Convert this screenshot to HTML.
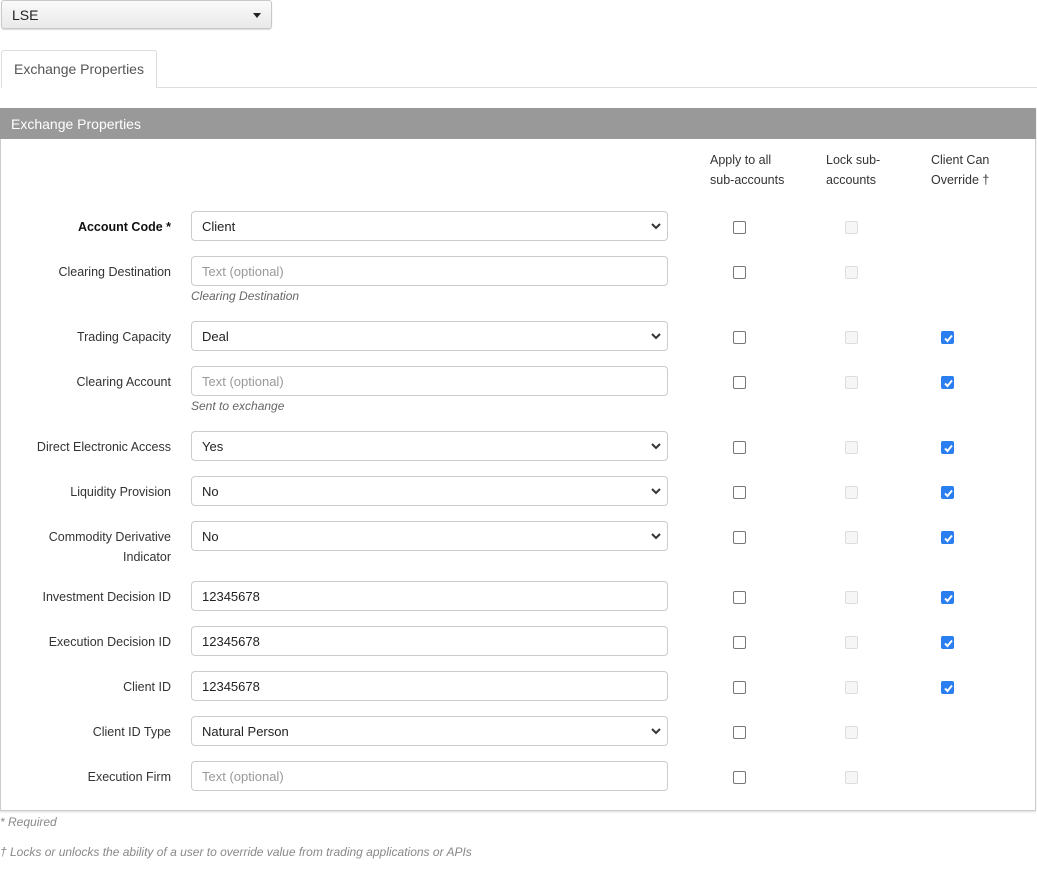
<!DOCTYPE html>
<html><head><meta charset="utf-8"><style>
*{box-sizing:border-box}
body{margin:0;width:1037px;height:879px;background:#fff;font-family:"Liberation Sans",sans-serif;color:#333;position:relative;overflow:hidden;font-size:13px}
.a{position:absolute}
.top{left:1px;top:0;width:271px;height:29px;border:1px solid #c8c8c8;border-radius:3px;background:linear-gradient(#fafafa,#e9e9e9);box-shadow:0 1px 1px rgba(0,0,0,.15);font-size:14px;padding:6px 10px;color:#222}
.tri{right:10px;top:12px;width:0;height:0;border-left:4px solid transparent;border-right:4px solid transparent;border-top:5px solid #222}
.tab{left:1px;top:50px;width:156px;height:38px;border:1px solid #ddd;border-bottom:none;border-radius:3px 3px 0 0;background:#fff;font-size:14px;color:#555;padding:10px 12px}
.tline{left:157px;top:87px;right:0;height:1px;background:#ddd}
.panel{left:0;top:108px;width:1036px;height:703px;border:1px solid #ccc;border-top:none;box-shadow:0 1px 2px rgba(0,0,0,.15)}
.hdr{left:0;top:108px;width:1036px;height:31px;background:#999;color:#fff;font-size:14px;padding:8px 11px}
.lbl{right:866px;text-align:right;font-size:12.5px;color:#333;line-height:20px}
.in{left:191px;width:477px;height:30px;border:1px solid #ccc;border-radius:4px;padding:7px 10px;font-size:13px;color:#222;background:#fff}
.ph{color:#999}
.chev{right:6px;top:9px}
.help{left:191px;font-style:italic;color:#666;font-size:12px}
.cb{width:13px;height:13px;border:1px solid #777;border-radius:2px;background:#fff}
.cb.d{border-color:#ddd;background:#f6f6f6}
.cb.c{background:#2a7ef0;border-color:#2a7ef0}
.cb.c svg{position:absolute;left:1px;top:1px}
.th{font-size:12.5px;line-height:20px;color:#333}
.foot{left:0;font-style:italic;color:#888;font-size:12px}
</style></head><body>
<div class="a top">LSE<div class="a tri"></div></div>
<div class="a tab">Exchange Properties</div>
<div class="a tline"></div>
<div class="a panel"></div>
<div class="a hdr">Exchange Properties</div>
<div class="a th" style="left:710px;top:150px">Apply to all<br>sub-accounts</div>
<div class="a th" style="left:826px;top:150px">Lock sub-<br>accounts</div>
<div class="a th" style="left:931px;top:150px">Client Can<br>Override †</div>
<div id="rows"></div>
<script>
var rows=[
["<b style='color:#111'>Account Code *</b>",226,"Client",1,0,0],
["Clearing Destination",271,"Text (optional)",0,1,0,"Clearing Destination"],
["Trading Capacity",336,"Deal",1,0,1],
["Clearing Account",381,"Text (optional)",0,1,1,"Sent to exchange"],
["Direct Electronic Access",446,"Yes",1,0,1],
["Liquidity Provision",491,"No",1,0,1],
["Commodity Derivative<br>Indicator",536,"No",1,0,1],
["Investment Decision ID",596,"12345678",0,0,1],
["Execution Decision ID",641,"12345678",0,0,1],
["Client ID",686,"12345678",0,0,1],
["Client ID Type",731,"Natural Person",1,0,0],
["Execution Firm",776,"Text (optional)",0,1,0]];
var h="";
rows.forEach(function(r){var y=r[1];
var lt=y-9;
h+='<div class="a lbl" style="top:'+lt+'px">'+r[0]+'</div>';
h+='<div class="a in" style="top:'+(y-15)+'px"><span class="'+(r[4]?'ph':'')+'">'+r[2]+'</span>'+(r[3]?'<svg class="a chev" width="10" height="10" viewBox="0 0 10 10"><path d="M1 3l4 4 4-4" fill="none" stroke="#333" stroke-width="2"/></svg>':'')+'</div>';
if(r[6])h+='<div class="a help" style="top:'+(y+18)+'px">'+r[6]+'</div>';
h+='<div class="a cb" style="left:733px;top:'+(y-5)+'px"></div>';
h+='<div class="a cb d" style="left:845px;top:'+(y-5)+'px"></div>';
if(r[5])h+='<div class="a cb c" style="left:941px;top:'+(y-5)+'px"><svg width="11" height="11" viewBox="0 0 11 11"><path d="M2 5.5l2.5 2.5 4.5-5.5" fill="none" stroke="#fff" stroke-width="2"/></svg></div>';
});
document.getElementById("rows").innerHTML=h;
</script>
<div class="a foot" style="top:815px">* Required</div>
<div class="a foot" style="top:845px">† Locks or unlocks the ability of a user to override value from trading applications or APIs</div>
</body></html>
